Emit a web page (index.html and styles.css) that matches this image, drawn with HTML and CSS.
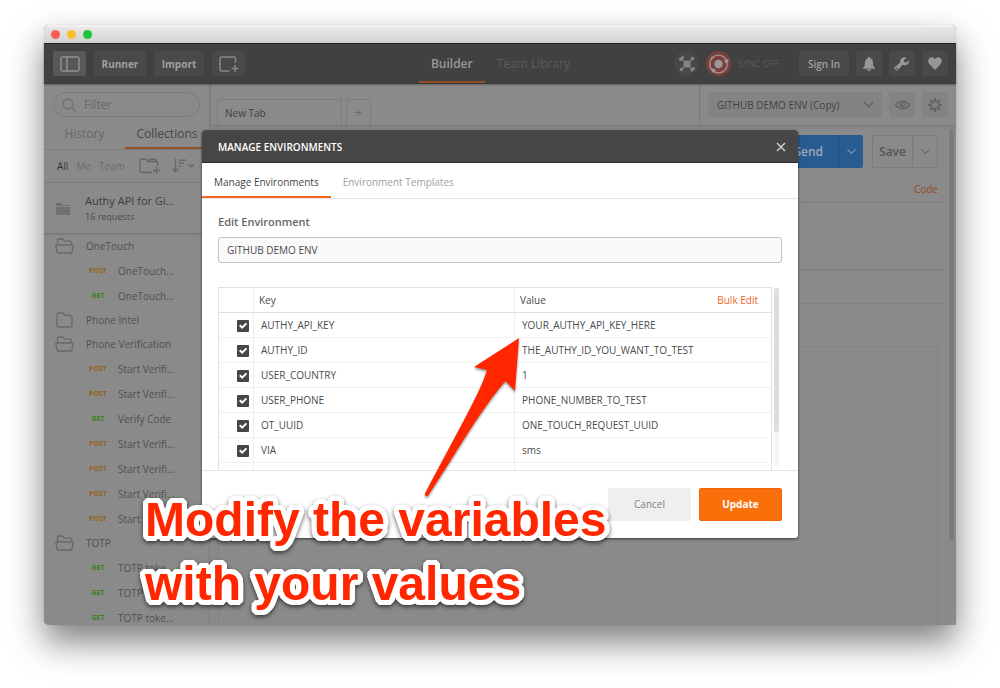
FILE: index.html
```html
<!DOCTYPE html>
<html lang="en">
<head>
<meta charset="utf-8">
<title>Manage Environments</title>
<link rel="stylesheet" href="styles.css">
</head>
<body>
<div class="window">
  <div class="titlebar"><span class="dot red"></span><span class="dot yellow"></span><span class="dot green"></span></div>

  <header class="topbar">
    <div class="group">
      <button class="tool icon-tool lit" aria-label="Toggle sidebar"><svg width="20" height="16" viewBox="0 0 20 16" fill="none" stroke="currentColor" stroke-width="1.5"><rect x="1" y="1" width="18" height="14" rx="1.5"/><path d="M7 1v14"/></svg></button>
      <button class="tool runner">Runner</button>
      <button class="tool import">Import</button>
      <button class="tool icon-tool" aria-label="New window"><svg width="20" height="16" viewBox="0 0 20 16" fill="none" stroke="currentColor" stroke-width="1.5"><path d="M10.500 15H2.500A1.500 1.500 0 0 1 1 13.500V2.500A1.500 1.500 0 0 1 2.500 1H15A1.500 1.500 0 0 1 16.500 2.500V7M16 9v7M12.500 12.500h7"/></svg></button>
    </div>
    <nav class="main-tabs">
      <a href="#builder" class="main-tab active">Builder</a>
      <a href="#library" class="main-tab">Team Library</a>
    </nav>
    <div class="group right">
      <button class="round" aria-label="Interceptor"><svg width="24" height="24" viewBox="0 0 24 24" fill="currentColor" stroke="currentColor"><circle cx="12" cy="12" r="3.600" stroke="none"/><path d="M6 6l12 12M18 6.500L6.500 17.500" stroke-width="1.200"/><path d="M4.500 8.500l4-4M16 19l3.500-3.500" stroke-width="2.600"/><circle cx="17.500" cy="6.500" r="1.700" stroke="none"/><circle cx="6.500" cy="17.500" r="1.700" stroke="none"/></svg></button>
      <button class="round sync" aria-label="Sync"><svg width="26" height="26" viewBox="0 0 26 26" fill="currentColor"><circle cx="12.500" cy="13" r="4.200"/><circle cx="12.500" cy="13" r="8.800" fill="none" stroke="currentColor" stroke-width="1.300"/><circle cx="20.500" cy="10" r="2"/><circle cx="7.500" cy="19.500" r="2"/><circle cx="6" cy="7" r="1.300"/></svg></button>
      <span class="sync-label">SYNC OFF</span>
      <button class="tool signin">Sign In</button>
      <button class="tool square" aria-label="Notifications"><svg width="14" height="14" viewBox="0 0 14 14" fill="currentColor"><path d="M7 0c.8 0 1.200.5 1.200 1.200C10.500 2 11 4 11 6c0 2.500.8 3.800 2 5v.800H1V11c1.200-1.200 2-2.500 2-5 0-2 .5-4 2.800-4.800C5.800.5 6.200 0 7 0zM5 12.300h4C8.600 13.500 8 14 7 14s-1.600-.5-2-1.700z"/></svg></button>
      <button class="tool square" aria-label="Settings"><svg width="16" height="14" viewBox="0 0 16 14" fill="currentColor"><path d="M12.500.8L9.800 3.300l.4 1.800 1.900.4 2.700-2.300c.6 3-1.300 5.300-4.300 5.100-.7 0-1.300-.3-1.900-.5l-4.500 5C2.300 14.600-.7 12 .9 10l5.200-4.200C5.500 2.500 8.500-.9 12.500.800zM2.600 10.700a.9.9 0 1 0 0 1.800.9.9 0 0 0 0-1.800z" fill-rule="evenodd"/></svg></button>
      <button class="tool square" aria-label="Favourites"><svg width="14" height="13" viewBox="0 0 14 13" fill="currentColor"><path d="M7 13L1.300 7C-.6 5 0 1.600 2.300.5 4.200-.4 6.200.4 7 2.200 7.800.4 9.800-.4 11.700.5 14 1.600 14.600 5 12.700 7z"/></svg></button>
    </div>
  </header>

  <div class="workspace">
    <aside class="sidebar">
      <label class="filter"><svg width="14" height="14" viewBox="0 0 14 14" fill="none" stroke="currentColor" stroke-width="1.300"><circle cx="6" cy="6" r="5"/><path d="M9.500 9.500L13.500 13.500"/></svg><input type="text" placeholder="Filter" aria-label="Filter"></label>
      <nav class="side-tabs"><a href="#history">History</a><a href="#collections" class="active">Collections</a></nav>
      <div class="scope">
        <a href="#all" class="active">All</a><a href="#me">Me</a><a href="#team">Team</a>
        <button class="bare new-folder" aria-label="New collection"><svg width="21" height="16" viewBox="0 0 21 16" fill="none" stroke="currentColor" stroke-width="1.300"><path d="M12.500 14.500H2.500A1.500 1.500 0 0 1 1 13V2.500A1.500 1.500 0 0 1 2.500 1H7l2 2.500h8A1.500 1.500 0 0 1 18.500 5V8M9 3.500l2-2.200h6L18 4M17.500 9v7M14 12.500h7"/></svg></button>
        <button class="bare" aria-label="Sort"><svg width="22" height="14" viewBox="0 0 22 14" fill="none" stroke="currentColor" stroke-width="1.300"><path d="M3.500 0v12M.5 9.500L3.500 12.500 6.500 9.500M6.500 1.200h7.500M6.500 4.200h5.500M6.500 7.200h3"/><path d="M17 5.500l2.300 2.300 2.300-2.300"/></svg></button>
      </div>
      <div class="collection">
        <svg width="14" height="12" viewBox="0 0 14 12" fill="currentColor"><path d="M0 0h5l1.500 2H14v1H0zM0 4h14v8H0z"/></svg>
        <div><div class="name">Authy API for Gi...</div><div class="count">16 requests</div></div>
      </div>
      <svg class="defs" width="0" height="0" aria-hidden="true"><defs>
        <symbol id="open" viewBox="0 0 19 16"><path d="M2.500 7V2.300C2.500 1.500 3 1 3.700 1h3.800l2 2.200h5.800c.8 0 1.200.5 1.200 1.200V7M1.500 7h16c.5 0 .8.400.7.900l-1.200 6c-.1.600-.5 1.100-1.200 1.100H3.200c-.7 0-1.100-.5-1.200-1.100l-1.200-6C.7 7.400 1 7 1.500 7z" fill="none" stroke="currentColor" stroke-width="1.300"/></symbol>
        <symbol id="closed" viewBox="0 0 19 16"><path d="M2 2.500C2 1.600 2.600 1 3.500 1H8l2.200 2.500h5.300c.9 0 1.500.6 1.500 1.500v8.500c0 .9-.6 1.500-1.500 1.500h-12C2.600 15 2 14.400 2 13.500z" fill="none" stroke="currentColor" stroke-width="1.300"/></symbol>
      </defs></svg>
      <ul class="tree">
        <li class="folder"><svg width="19" height="16"><use href="#open"/></svg>OneTouch</li>
        <li class="request"><b class="post">POST</b>OneTouch...</li>
        <li class="request"><b class="get">GET</b>OneTouch...</li>
        <li class="folder"><svg width="19" height="16"><use href="#closed"/></svg>Phone Intel</li>
        <li class="folder"><svg width="19" height="16"><use href="#open"/></svg>Phone Verification</li>
        <li class="request"><b class="post">POST</b>Start Verifi...</li>
        <li class="request"><b class="post">POST</b>Start Verifi...</li>
        <li class="request"><b class="get">GET</b>Verify Code</li>
        <li class="request"><b class="post">POST</b>Start Verifi...</li>
        <li class="request"><b class="post">POST</b>Start Verifi...</li>
        <li class="request"><b class="post">POST</b>Start Verifi...</li>
        <li class="request"><b class="post">POST</b>Start Verifi...</li>
        <li class="folder"><svg width="19" height="16"><use href="#open"/></svg>TOTP</li>
        <li class="request"><b class="get">GET</b>TOTP toke...</li>
        <li class="request"><b class="get">GET</b>TOTP toke...</li>
        <li class="request"><b class="get">GET</b>TOTP toke...</li>
      </ul>
    </aside>

    <main class="content">
      <div class="tab-strip">
        <div class="request-tabs"><button class="request-tab">New Tab</button><button class="add-tab" aria-label="Add tab">+</button></div>
        <div class="environment">
          <div class="env-picker"><select aria-label="Environment"><option>GITHUB DEMO ENV (Copy)</option></select><svg width="11" height="7" viewBox="0 0 11 7" fill="none" stroke="currentColor" stroke-width="1.300"><path d="M.7.700l4.800 5 4.800-5"/></svg></div>
          <button class="env-button" aria-label="Quick look"><svg width="15" height="10" viewBox="0 0 15 10"><path d="M.7 5C4 0 11 0 14.300 5 11 10 4 10 .7 5z" fill="none" stroke="currentColor" stroke-width="1.400"/><circle cx="7.500" cy="4.700" r="2.800" fill="currentColor"/><circle cx="8.300" cy="4" r="1" fill="#868686"/></svg></button>
          <button class="env-button" aria-label="Environment settings"><svg width="14" height="14" viewBox="0 0 14 14" fill="none" stroke="currentColor"><circle cx="7" cy="7" r="3.800" stroke-width="2"/><path d="M7 0v3M7 11v3M0 7h3M11 7h3M2.050 2.050l2.100 2.100M9.850 9.850l2.100 2.100M2.050 11.950l2.100-2.100M9.850 4.150l2.100-2.100" stroke-width="2.200"/></svg></button>
        </div>
      </div>
      <div class="panel">
        <div class="request-pane">
          <div class="actions">
            <div class="split send"><button>Send</button><button aria-label="Send options"><svg width="9" height="6" viewBox="0 0 9 6" fill="none" stroke="currentColor" stroke-width="1.200"><path d="M.5.500l4 4 4-4"/></svg></button></div>
            <div class="split save"><button>Save</button><button aria-label="Save options"><svg width="9" height="6" viewBox="0 0 9 6" fill="none" stroke="currentColor" stroke-width="1.200"><path d="M.5.500l4 4 4-4"/></svg></button></div>
          </div>
          <div class="code-row"><a href="#code">Code</a></div>
          <div class="line tall"></div>
          <div class="line short"></div>
          <div class="response"></div>
        </div>
        <div class="page-scroll"><span></span></div>
      </div>
    </main>
  </div>

  <section class="modal" role="dialog" aria-labelledby="modal-title">
    <header class="modal-head"><h1 id="modal-title">MANAGE ENVIRONMENTS</h1><button class="bare" aria-label="Close"><svg width="10" height="10" viewBox="0 0 10 10" stroke="currentColor" stroke-width="1.500"><path d="M1 1l8 8M9 1L1 9"/></svg></button></header>
    <nav class="modal-tabs"><a href="#manage" class="active">Manage Environments</a><a href="#templates">Environment Templates</a></nav>
    <div class="modal-body">
      <label for="env-name">Edit Environment</label>
      <input id="env-name" class="env-name" type="text" value="GITHUB DEMO ENV">
      <div class="scroller">
        <table class="vars">
          <thead><tr><th class="check"></th><th class="key">Key</th><th><div class="value-head"><span>Value</span><a href="#bulk">Bulk Edit</a></div></th></tr></thead>
          <tbody>
            <tr><td><input type="checkbox" checked aria-label="AUTHY_API_KEY"></td><td>AUTHY_API_KEY</td><td>YOUR_AUTHY_API_KEY_HERE</td></tr>
            <tr><td><input type="checkbox" checked aria-label="AUTHY_ID"></td><td>AUTHY_ID</td><td>THE_AUTHY_ID_YOU_WANT_TO_TEST</td></tr>
            <tr><td><input type="checkbox" checked aria-label="USER_COUNTRY"></td><td>USER_COUNTRY</td><td>1</td></tr>
            <tr><td><input type="checkbox" checked aria-label="USER_PHONE"></td><td>USER_PHONE</td><td>PHONE_NUMBER_TO_TEST</td></tr>
            <tr><td><input type="checkbox" checked aria-label="OT_UUID"></td><td>OT_UUID</td><td>ONE_TOUCH_REQUEST_UUID</td></tr>
            <tr><td><input type="checkbox" checked aria-label="VIA"></td><td>VIA</td><td>sms</td></tr>
            <tr><td><input type="checkbox" aria-label="New variable"></td><td></td><td></td></tr>
          </tbody>
        </table>
        <div class="table-scroll"><span></span></div>
      </div>
    </div>
    <footer class="modal-foot"><button class="cancel">Cancel</button><button class="update">Update</button></footer>
  </section>

  <svg class="arrow" width="110" height="170" viewBox="0 0 110 170"><path d="M104 3L59 32 72 35C65 58 47 88 10 158.500 9.500 161 12 162 13.500 160 45 112 66 74 90.500 46L100 56z" fill="#ff2600"/></svg>
  <p class="callout">Modify the variables<br>with your values</p>
</div>
</body>
</html>
```

FILE: styles.css
```css
* { box-sizing: border-box; }
body {
  margin: 0;
  height: 100vh;
  padding: 25px 44px 63px;
  background: #fff;
  font: 10px/16px "Open Sans", "Noto Sans", sans-serif;
  color: #4b4b4b;
}
button, input, select { font: inherit; color: inherit; margin: 0; }
button { border: 0; padding: 0; background: none; display: flex; align-items: center; justify-content: center; }
a { color: inherit; text-decoration: none; }
svg { display: block; flex: none; }
.bare { color: #666; }
.defs { position: absolute; }

.window {
  position: relative;
  height: 100%;
  display: flex;
  flex-direction: column;
  border-radius: 5px;
  background: #8a8a8a;
  box-shadow: 0 0 1px rgba(0, 0, 0, .3), 0 17px 34px rgba(0, 0, 0, .5);
}
.titlebar {
  height: 18px;
  display: flex;
  align-items: center;
  gap: 7px;
  padding: 0 7px;
  border-radius: 5px 5px 0 0;
  background: linear-gradient(#f6f6f6, #e6e6e6 3px, #d2d2d2);
}
.dot { width: 9px; height: 9px; border-radius: 50%; }
.red { background: #fc5b57; }
.yellow { background: #fdbc2e; }
.green { background: #1fc634; }

.topbar {
  height: 41px;
  flex: none;
  display: grid;
  grid-template-columns: 1fr auto 1fr;
  align-items: center;
  padding: 0 8px 0 9px;
  background: #414141;
  border-top: 1px solid #222;
  border-bottom: 1px solid #383838;
  box-shadow: 0 1px 2px rgba(0, 0, 0, .3);
  z-index: 1;
}
.group { display: flex; align-items: center; gap: 8px; }
.right { justify-content: flex-end; gap: 7px; }
.tool { height: 25px; border-radius: 2px; background: #494949; color: #a0a0a0; font-weight: 600; }
.icon-tool { width: 33px; color: #888; }
.lit { background: #585858; color: #909090; }
.runner { width: 52px; font-weight: 700; }
.import { width: 50px; font-weight: 700; }
.signin { width: 50px; }
.square { width: 26px; color: #979797; }
.main-tabs { display: flex; align-self: stretch; font-size: 12px; }
.main-tab { display: flex; align-items: center; padding: 2px 12px 0; color: #5c5c5c; border-bottom: 2px solid transparent; }
.main-tab.active { color: #999; font-weight: 600; border-color: #914d26; }
.round { width: 25px; height: 25px; border-radius: 50%; background: #484848; color: #858585; }
.sync { background: #7c3f3b; color: #999; }
.sync-label { width: 54px; font-size: 9px; white-space: nowrap; color: #5b5b5b; }

.workspace { flex: 1; min-height: 0; display: flex; }
.sidebar {
  width: 166px;
  flex: none;
  display: flex;
  flex-direction: column;
  border-right: 1px solid #7c7c7c;
  box-shadow: 1px 0 1px rgba(0, 0, 0, .08);
}
.filter {
  display: flex;
  align-items: center;
  gap: 8px;
  height: 25px;
  flex: none;
  margin: 8px 9px 7px;
  padding: 0 8px;
  border: 1px solid #7b7b7b;
  border-radius: 13px;
  color: #707070;
}
.filter input { flex: 1; min-width: 0; border: 0; padding: 0; background: none; font-size: 12px; outline: 0; }
.filter input::placeholder { color: #686868; opacity: 1; }
.side-tabs { display: grid; grid-template-columns: 81fr 84fr; height: 26px; flex: none; border-bottom: 1px solid #7d7d7d; font-size: 12px; line-height: 20px; color: #666; text-align: center; }
.side-tabs .active { color: #464646; border-bottom: 2px solid #95512c; }
.scope { display: flex; align-items: center; gap: 8px; height: 33px; flex: none; padding: 0 13px; border-bottom: 1px solid #7c7c7c; color: #6b6b6b; }
.scope .active { color: #333; }
.new-folder { margin-left: 6px; margin-right: 4px; }
.collection { display: flex; align-items: center; gap: 15px; height: 51px; flex: none; padding: 2px 12px 0; border-bottom: 1px solid #797979; box-shadow: 0 1px 1px rgba(0, 0, 0, .08); color: #707070; }
.name { font-size: 11px; color: #3c3c3c; }
.count { font-size: 9px; color: #4c4c4c; }
.tree { flex: 1; min-height: 0; overflow: hidden; list-style: none; margin: 0; padding: 0; line-height: 12px; white-space: nowrap; color: #505050; }
.tree li { display: flex; align-items: center; height: 25px; }
.tree .folder { height: 24px; gap: 12px; padding-left: 11px; }
.folder svg { color: #686868; }
.request { gap: 4px; padding-left: 38px; }
.request b { width: 32px; text-align: center; font-size: 7px; }
.post { color: #96621a; }
.get { color: #3f7f1a; }

.content { flex: 1; min-width: 0; display: flex; flex-direction: column; }
.tab-strip { height: 42px; flex: none; display: flex; border-bottom: 1px solid #7d7d7d; }
.request-tabs { flex: 1; display: flex; align-items: flex-end; gap: 4px; padding-left: 7px; }
.request-tab, .add-tab { height: 26px; border: 1px solid #7d7d7d; border-bottom: 0; border-radius: 2px 2px 0 0; color: #414141; }
.request-tab { width: 125px; justify-content: flex-start; padding-left: 7px; }
.add-tab { width: 25px; font-size: 12px; color: #666; }
.environment { display: flex; align-items: center; gap: 7px; padding: 0 8px; border-left: 1px solid #7b7b7b; }
.env-picker { display: flex; align-items: center; width: 174px; height: 25px; padding-right: 8px; border-radius: 2px; background: #838383; color: #606060; }
.env-picker select { flex: 1; min-width: 0; appearance: none; border: 0; padding: 0 9px; background: none; color: #414141; }
.env-button { width: 26px; height: 25px; border-radius: 2px; background: #838383; color: #656565; }
.panel { flex: 1; display: flex; justify-content: space-between; padding-top: 9px; background: linear-gradient(#808080, #8a8a8a 4px); }
.request-pane { flex: 1; display: flex; flex-direction: column; }
.actions { display: flex; justify-content: flex-end; gap: 9px; padding-right: 8px; }
.split { display: flex; height: 33px; border-radius: 2px; font-size: 12px; font-weight: 600; }
.split button + button { width: 25px; }
.send { background: #285b92; color: #a0a8b0; }
.send button:first-child { width: 66px; justify-content: flex-end; padding-right: 15px; }
.send button + button { border-left: 1px solid #234f80; color: #7d8fa3; }
.save { border: 1px solid #7c7c7c; color: #555; }
.save button:first-child { width: 39px; }
.save button + button { border-left: 1px solid #7c7c7c; color: #686868; }
.code-row { display: flex; justify-content: flex-end; align-items: center; height: 35px; padding: 8px 8px 0; border-bottom: 1px solid #7e7e7e; color: #934a25; }
.line { border-bottom: 1px solid #7c7c7c; }
.tall { height: 67px; }
.short { height: 34px; border-color: #818181; }
.response { flex: 1; margin: 42px 8px 0; border: 1px solid #838383; border-bottom: 0; }
.page-scroll { width: 10px; padding-left: 3px; margin-top: -6px; }
.page-scroll span { display: block; width: 5px; height: 83%; border-radius: 3px; background: #7a7a7a; }

.modal {
  position: absolute;
  top: 105px;
  left: 50%;
  transform: translateX(-50%);
  width: 596px;
  max-width: 100%;
  z-index: 2;
  border-radius: 3px;
  background: #fff;
  box-shadow: 0 1px 3px rgba(0, 0, 0, .6);
}
.modal-head { display: flex; align-items: center; justify-content: space-between; height: 33px; padding: 1px 12px 0 16px; border-radius: 3px 3px 0 0; background: #464646; border-bottom: 1px solid #2c2c2c; }
.modal-head h1 { margin: 0; font-size: 10px; font-weight: 600; color: #fff; }
.modal-head .bare { color: #ccc; }
.modal-tabs { display: flex; height: 36px; border-bottom: 1px solid #e2e2e2; line-height: 38px; color: #a0a0a0; }
.modal-tabs a { padding: 0 12px; height: 35px; }
.modal-tabs .active { color: #444; border-bottom: 2px solid #f3681f; }
.modal-body { padding: 15px 16px 0; }
.modal-body label { display: block; font-size: 11px; font-weight: 600; color: #666; }
.env-name { display: block; width: 100%; height: 26px; margin: 7px 0 24px; padding: 0 8px; border: 1px solid #c4c4c4; border-radius: 3px; background: #fafafa; color: #4a4a4a; }
.scroller { display: flex; gap: 2px; height: 183px; overflow: hidden; margin-right: 3px; }
.vars { flex: 1; border-collapse: separate; border-spacing: 0; border: 1px solid #e0e0e0; border-bottom: 0; table-layout: fixed; align-self: flex-start; }
.vars th { height: 25px; padding: 0 5px; border-bottom: 1px solid #ddd; font-weight: 400; text-align: left; }
.vars td { height: 25px; padding: 0 7px; border-bottom: 1px solid #f1f1f1; }
.vars th + th, .vars td + td { border-left: 1px solid #eee; }
.vars .check { width: 34px; }
.vars .key { width: 261px; }
.vars td:first-child { padding: 2px 0 0 18px; }
.value-head { display: flex; justify-content: space-between; padding-right: 8px; }
.value-head a { color: #ee6321; }
.vars input { display: block; appearance: none; width: 12px; height: 12px; border-radius: 1px; background: #dcdcdc; }
.vars input:checked { background: #464646; }
.vars input:checked::after { content: ""; display: block; width: 12px; height: 12px; background: #fff; clip-path: polygon(17% 50%, 29% 38%, 43% 52%, 73% 22%, 85% 34%, 43% 76%); }
.table-scroll { width: 5px; margin: 1px 0 4px; border-radius: 3px; background: #f5f5f5; }
.table-scroll span { display: block; height: 81%; border-radius: 3px; background: #dedede; }
.modal-foot { display: flex; justify-content: flex-end; gap: 8px; padding: 17px 16px; border-top: 1px solid #e6e6e6; }
.modal-foot button { width: 83px; height: 33px; padding-bottom: 2px; border-radius: 2px; }
.cancel { background: #efefef; color: #808080; }
.update { background: #f9700a; border: 1px solid #f1660c; color: #fff; font-weight: 700; }

.arrow { position: absolute; left: 371px; top: 310px; z-index: 3; filter: drop-shadow(0 2px 1px rgba(0, 0, 0, .4)); }
.callout {
  position: absolute;
  left: 101px;
  top: 463px;
  z-index: 3;
  margin: 0;
  font: 700 48px/64px "Liberation Sans", Arial, sans-serif;
  white-space: nowrap;
  color: #ff2600;
  text-shadow:
    5px 0 #fff, -5px 0 #fff, 0 5px #fff, 0 -5px #fff,
    4px 3px #fff, 3px 4px #fff, -4px 3px #fff, -3px 4px #fff,
    4px -3px #fff, 3px -4px #fff, -4px -3px #fff, -3px -4px #fff,
    5px 2px #fff, 5px -2px #fff, -5px 2px #fff, -5px -2px #fff,
    2px 5px #fff, -2px 5px #fff, 2px -5px #fff, -2px -5px #fff,
    2px 0 #fff, -2px 0 #fff, 0 2px #fff, 0 -2px #fff;
  filter: drop-shadow(0 2px 2px rgba(0, 0, 0, .6));
}
```
